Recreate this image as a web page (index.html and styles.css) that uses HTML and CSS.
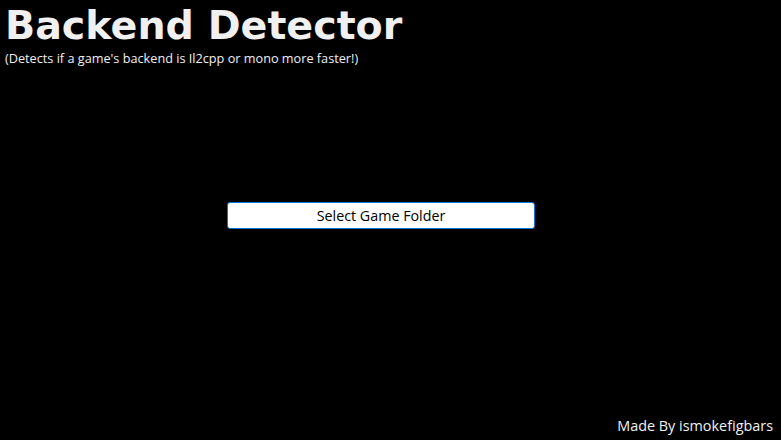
FILE: index.html
```html
<!DOCTYPE html>
<html>
<head>
<meta charset="utf-8">
<link rel="stylesheet" href="styles.css">
</head>
<body>
<div class="app">
  <header class="header">
    <h1 class="title">Backend Detector</h1>
    <p class="subtitle">(Detects if a game's backend is Il2cpp or mono more faster!)</p>
  </header>
  <main class="center">
    <button class="select-btn">Select Game Folder</button>
  </main>
  <footer class="footer">Made By ismokefigbars</footer>
</div>
</body>
</html>
```
FILE: styles.css
```css
html, body {
  margin: 0;
  padding: 0;
  background: #000;
  width: 781px;
  height: 440px;
  overflow: hidden;
}
.app {
  display: flex;
  flex-direction: column;
  height: 440px;
  color: #f0f0f0;
  font-family: "Open Sans", "Noto Sans", sans-serif;
}
.header {
  padding: 0 0 0 5px;
}
.title {
  margin: 0;
  font-family: "DejaVu Sans", sans-serif;
  font-weight: bold;
  font-size: 39.6px;
  line-height: 50px;
  color: #f0f0f0;
}
.subtitle {
  margin: 0;
  font-size: 12.7px;
  line-height: 17px;
}
.center {
  display: flex;
  justify-content: center;
  padding: 135px 19px 0 0;
  flex: 1;
}
.select-btn {
  width: 308px;
  height: 27px;
  background: #fff;
  border: 1px solid #0078d4;
  border-radius: 3px;
  font-family: "Open Sans", "Noto Sans", sans-serif;
  font-size: 14.3px;
  color: #000;
  padding: 0;
}
.footer {
  text-align: right;
  padding: 0 8px 5px 0;
  font-size: 14.4px;
  line-height: 19px;
}
```
